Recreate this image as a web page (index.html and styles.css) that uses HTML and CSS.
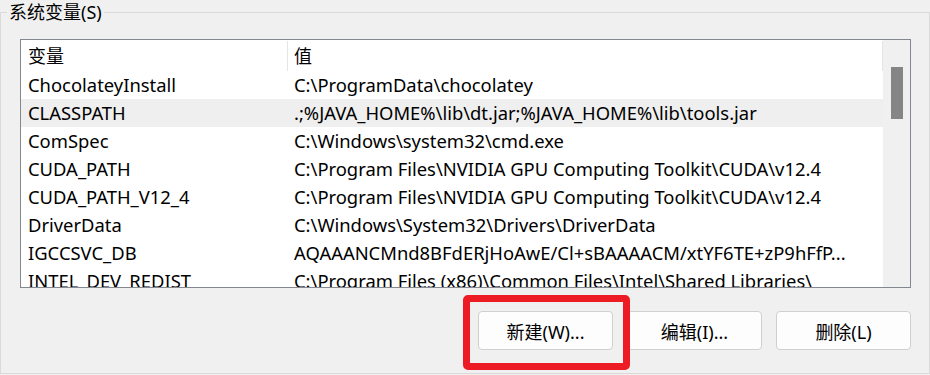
FILE: index.html
```html
<!DOCTYPE html>
<html lang="zh-CN">
<head>
    <meta charset="UTF-8">
    <meta name="viewport" content="width=device-width, initial-scale=1.0">
    <title>系统变量</title>
    <link rel="stylesheet" href="styles.css">
</head>
<body>

    <fieldset class="group">
        <legend>系统变量(S)</legend>

        <div class="list">
            <div class="list-body">
                <div class="list-head">
                    <div class="col-name">变量</div>
                    <div class="col-value">值</div>
                </div>
                <div class="row"><div class="col-name">ChocolateyInstall</div><div class="col-value">C:\ProgramData\chocolatey</div></div>
                <div class="row hover"><div class="col-name">CLASSPATH</div><div class="col-value">.;%JAVA_HOME%\lib\dt.jar;%JAVA_HOME%\lib\tools.jar</div></div>
                <div class="row"><div class="col-name">ComSpec</div><div class="col-value">C:\Windows\system32\cmd.exe</div></div>
                <div class="row"><div class="col-name">CUDA_PATH</div><div class="col-value">C:\Program Files\NVIDIA GPU Computing Toolkit\CUDA\v12.4</div></div>
                <div class="row"><div class="col-name">CUDA_PATH_V12_4</div><div class="col-value">C:\Program Files\NVIDIA GPU Computing Toolkit\CUDA\v12.4</div></div>
                <div class="row"><div class="col-name">DriverData</div><div class="col-value">C:\Windows\System32\Drivers\DriverData</div></div>
                <div class="row"><div class="col-name">IGCCSVC_DB</div><div class="col-value">AQAAANCMnd8BFdERjHoAwE/Cl+sBAAAACM/xtYF6TE+zP9hFfP...</div></div>
                <div class="row"><div class="col-name">INTEL_DEV_REDIST</div><div class="col-value">C:\Program Files (x86)\Common Files\Intel\Shared Libraries\</div></div>
            </div>
            <div class="scrollbar"><div class="thumb"></div></div>
        </div>

        <div class="buttons">
            <span class="marked"><button class="btn">新建(W)...</button></span>
            <button class="btn">编辑(I)...</button>
            <button class="btn">删除(L)</button>
        </div>
    </fieldset>

</body>
</html>
```

FILE: styles.css
```css
body {
    margin: 0;
    background: #f0f0f0;
    font-family: "Noto Sans", "Noto Sans CJK SC", sans-serif;
    font-size: 18px;
    color: #000;
    overflow: hidden;
}
.group {
    margin: 0;
    padding: 0;
    border: 1px solid #dadada;
    height: 374px;
    box-sizing: border-box;
}
.group legend {
    margin-left: 6px;
    padding: 0 2px;
    line-height: 24px;
}
.list {
    display: flex;
    margin: 15px 18px 0 19px;
    height: 249px;
    box-sizing: border-box;
    border: 1px solid #828790;
    background: #fff;
}
.list-body {
    flex: 1;
    overflow: hidden;
}
.list-head,
.row {
    display: flex;
    white-space: nowrap;
}
.list-head {
    height: 31px;
    line-height: 30px;
}
.list-head .col-name,
.list-head .col-value {
    border-right: 1px solid #e5e5e5;
    margin-top: 1px;
}
.row {
    height: 28px;
    line-height: 28px;
    font-size: 18.4px;
}
.row.hover {
    background: #efefef;
}
.col-name {
    width: 267px;
    flex: none;
    box-sizing: border-box;
    padding-left: 7px;
    overflow: hidden;
}
.col-value {
    flex: 1;
    padding-left: 6px;
    overflow: hidden;
}
.scrollbar {
    width: 27px;
    padding: 27px 0 0 8px;
    box-sizing: border-box;
    background: #f0f0f0;
}
.thumb {
    width: 12px;
    height: 52px;
    background: #858585;
}
.buttons {
    display: flex;
    justify-content: flex-end;
    gap: 14px;
    margin: 23px 18px 0 0;
}
.btn {
    width: 135px;
    height: 39px;
    padding: 0;
    border: 1px solid #d0d0d0;
    border-radius: 4px;
    background: #fdfdfd;
    font: inherit;
    color: #000;
}
.marked {
    position: relative;
    display: flex;
}
.marked::after {
    content: "";
    position: absolute;
    left: -15px;
    top: -16px;
    right: -17px;
    bottom: -20px;
    border: 7px solid #ed1c24;
    border-radius: 5px;
    pointer-events: none;
}
```
